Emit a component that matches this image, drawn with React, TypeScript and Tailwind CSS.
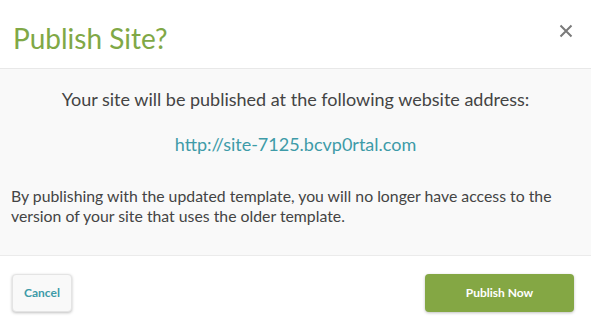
import React from 'react';

export default function App() {
  return (
    <div className="w-[591px] h-[317px] bg-white flex flex-col font-['Lato','Liberation_Sans',sans-serif]">
      <div className="h-[69px] flex items-start justify-between border-b border-[#e8e8e8] shrink-0">
        <h1 className="pl-[13px] pt-[20px] text-[28px] leading-[36px] text-[#80a846]">Publish Site?</h1>
        <button className="mr-[18px] mt-[20px] text-[#777] text-[24px] leading-[20px]" aria-label="Close">
          <svg width="14" height="14" viewBox="0 0 14 14" className="mt-[4px]">
            <path d="M1.5 1.5 L12.5 12.5 M12.5 1.5 L1.5 12.5" stroke="#7a7a7a" strokeWidth="2" />
          </svg>
        </button>
      </div>
      <div className="h-[187px] bg-[#f9f9f9] border-b border-[#ebebeb] shrink-0 flex flex-col">
        <p className="pt-[18px] text-center text-[18px] leading-[24px] text-[#444]">
          Your site will be published at the following website address:
        </p>
        <p className="pt-[21px] text-center text-[18px] leading-[24px] text-[#3e9ba8]">
          http://site-7125.bcvp0rtal.com
        </p>
        <p className="pt-[30px] px-[11px] text-[15.8px] leading-[20px] text-[#444]">
          By publishing with the updated template, you will no longer have access to the version of your site that uses the older template.
        </p>
      </div>
      <div className="flex-1 flex items-start justify-between pt-[18px] pl-[12px] pr-[17px]">
        <button className="w-[60px] h-[38px] rounded-[4px] bg-[#f9f9f9] border border-[#e4e4e4] shadow-[0_1px_3px_rgba(0,0,0,0.25)] text-[12px] font-bold text-[#3e9ba8]">
          Cancel
        </button>
        <button className="w-[149px] h-[38px] rounded-[4px] bg-[#84a744] shadow-[0_1px_3px_rgba(0,0,0,0.25)] text-[12px] font-bold text-white">
          Publish Now
        </button>
      </div>
    </div>
  );
}
